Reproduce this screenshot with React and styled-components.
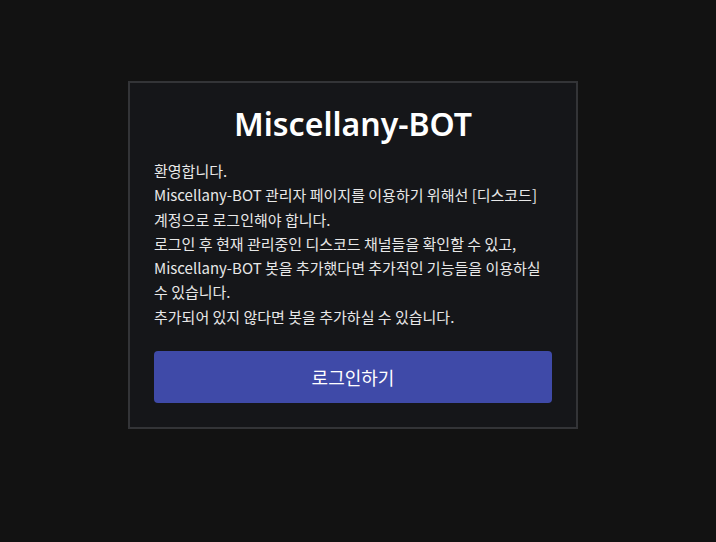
import React from 'react'
import styled, { createGlobalStyle } from 'styled-components'

const GlobalStyle = createGlobalStyle`
  html, body {
    margin: 0;
    padding: 0;
    background-color: #121212;
  }
  body {
    font-family: 'Noto Sans CJK KR', 'Noto Sans', sans-serif;
    color: #ececec;
  }
`

const Page = styled.div`
  display: flex;
  justify-content: center;
  min-height: 542px;
  box-sizing: border-box;
  padding: 81px 10px 0 0;
`

const Card = styled.section`
  width: 450px;
  height: 348px;
  box-sizing: border-box;
  border: 2px solid #333437;
  background-color: #151619;
  padding: 15px 24px 24px;
  display: flex;
  flex-direction: column;
`

const Title = styled.h1`
  margin: 0;
  text-align: center;
  font-family: 'Noto Sans', sans-serif;
  font-size: 32px;
  font-weight: 600;
  line-height: 52px;
  color: #ffffff;
`

const Body = styled.p`
  margin: 9px 0 0;
  font-size: 15px;
  line-height: 24.3px;
  color: #e8e8e8;
`

const LoginButton = styled.button`
  margin-top: 22px;
  height: 52px;
  width: 100%;
  border: none;
  border-radius: 4px;
  background-color: #3f4aa8;
  color: #ffffff;
  font-family: inherit;
  font-size: 18px;
  cursor: pointer;
`

const App = () => {
  return (
    <>
      <GlobalStyle />
      <Page>
        <Card>
          <Title>Miscellany-BOT</Title>
          <Body>
            환영합니다.
            <br />
            Miscellany-BOT 관리자 페이지를 이용하기 위해선 [디스코드]
            <br />
            계정으로 로그인해야 합니다.
            <br />
            로그인 후 현재 관리중인 디스코드 채널들을 확인할 수 있고,
            <br />
            Miscellany-BOT 봇을 추가했다면 추가적인 기능들을 이용하실
            <br />
            수 있습니다.
            <br />
            추가되어 있지 않다면 봇을 추가하실 수 있습니다.
          </Body>
          <LoginButton>로그인하기</LoginButton>
        </Card>
      </Page>
    </>
  )
}

export default App
